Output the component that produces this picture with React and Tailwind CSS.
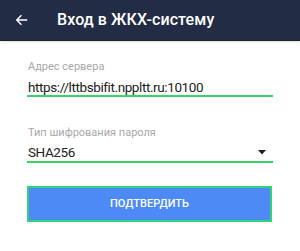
export default function App() {
  return (
    <div className="w-[300px] h-[251px] bg-white overflow-hidden" style={{ fontFamily: 'Roboto, "Noto Sans", sans-serif' }}>
      {/* Header */}
      <header className="h-[41px] bg-[#232c45] border-b border-[#1a2236] flex items-center text-white shadow-sm">
        <svg className="ml-[15px]" width="14" height="14" viewBox="0 0 24 24" fill="none" stroke="white" strokeWidth="2.4">
          <path d="M21 12H3M11 4l-8 8 8 8" />
        </svg>
        <h1 className="ml-[28px] text-[16px] font-medium tracking-[0.1px]">Вход в ЖКХ-систему</h1>
      </header>

      <div className="px-[27px]">
        {/* Server address */}
        <div className="pt-[19px]">
          <div className="text-[11px] leading-[13px] text-[#a8a8a8] pl-[1px]">Адрес сервера</div>
          <div className="mt-[6px] text-[13.5px] leading-[16px] text-[#222] pl-[1px] tracking-[-0.4px]">https://lttbsbifit.nppltt.ru:10100</div>
          <div className="h-[2px] w-[246px] bg-[#3cd26a]" />
        </div>

        {/* Encryption type */}
        <div className="pt-[29px]">
          <div className="text-[11px] leading-[13px] text-[#a8a8a8] pl-[1px]">Тип шифрования пароля</div>
          <div className="mt-[5px] flex items-center justify-between pr-[7px]">
            <span className="text-[13.5px] leading-[16px] text-[#222] pl-[1px] tracking-[-0.4px]">SHA256</span>
            <svg width="8" height="5" viewBox="0 0 8 5">
              <path d="M0 0h8L4 4.5z" fill="#222" />
            </svg>
          </div>
          <div className="mt-[1px] h-[2px] w-[246px] bg-[#3cd26a]" />
        </div>

        {/* Button */}
        <button className="mt-[23px] w-[245px] h-[36px] bg-[#4d8af5] border-2 border-[#33d17a] text-white text-[11px] font-medium">
          ПОДТВЕРДИТЬ
        </button>
      </div>
    </div>
  )
}
